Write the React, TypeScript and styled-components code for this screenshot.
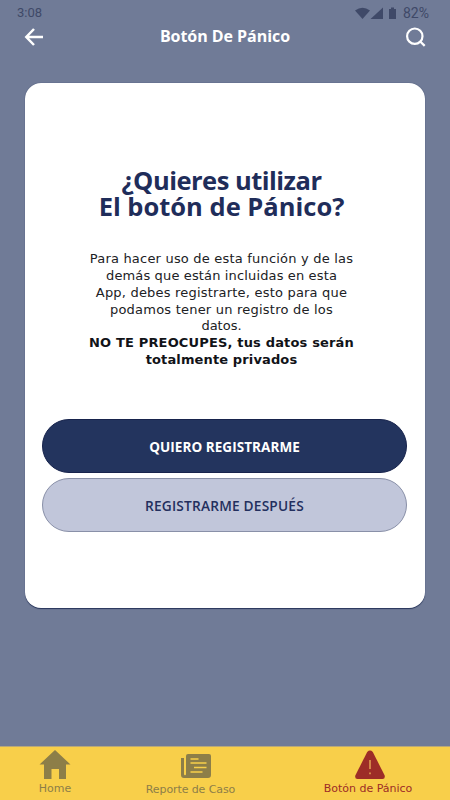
import React from 'react';
import styled, { createGlobalStyle } from 'styled-components';

const GlobalStyle = createGlobalStyle`
  * { box-sizing: border-box; }
  body { margin: 0; background: #707b97; }
  button { margin: 0; padding: 0; border: 0; background: none; cursor: pointer; }
  svg { display: block; }
`;

const Screen = styled.div`
  width: 450px;
  height: 800px;
  display: flex;
  flex-direction: column;
  background: #707b97;
  overflow: hidden;
`;

const StatusBar = styled.div`
  height: 24px;
  padding: 2px 21px 0 17px;
  display: flex;
  justify-content: space-between;
  align-items: center;
  color: #3f4968;
  font: 400 13px/20px Roboto, sans-serif;
`;

const StatusIcons = styled.div`
  display: flex;
  align-items: center;
  font-size: 14px;
  svg { margin-right: 5px; }
`;

const Header = styled.header`
  height: 25px;
  padding: 0 24px 0 24px;
  display: grid;
  grid-template-columns: 20px 1fr 20px;
  align-items: center;
`;

const Title = styled.h1`
  margin: -2px 0 0;
  text-align: center;
  color: #fff;
  font: 700 16px/22px 'Open Sans', sans-serif;
  letter-spacing: -0.05px;
`;

const Card = styled.main`
  width: 400px;
  height: 525px;
  margin: 34px 0 0 25px;
  padding: 84px 18px 0 17px;
  display: flex;
  flex-direction: column;
  align-items: center;
  flex-shrink: 0;
  background: #fff;
  border-radius: 16px;
  box-shadow: 0 0.5px 1px 0 #27345a;
`;

const Question = styled.h2`
  margin: 0 0 32px -6px;
  color: #1f2d5a;
  text-align: center;
  font: 700 25.5px/26px 'Open Sans', sans-serif;
`;

const Line = styled.span<{ $spacing?: number }>`
  display: block;
  white-space: nowrap;
  letter-spacing: ${({ $spacing = 0 }) => $spacing}px;
`;

const Message = styled.p`
  height: 117px;
  margin: 0 0 51px -6px;
  padding-top: 0.4px;
  color: #202124;
  text-align: center;
  font: 400 13px/16.7px 'DejaVu Sans', sans-serif;
`;

const Strong = styled.strong`
  color: #111318;
  font-weight: 700;
`;

const Action = styled.button<{ $primary?: boolean }>`
  && {
    width: 365px;
    height: 54px;
    margin-bottom: 5px;
    padding-top: 2px;
    flex-shrink: 0;
    border: 1px solid ${({ $primary }) => ($primary ? '#17234c' : '#8990a8')};
    border-radius: 27px;
    background: ${({ $primary }) => ($primary ? '#23345e' : '#c1c6da')};
    color: ${({ $primary }) => ($primary ? '#fff' : '#232f5e')};
    font: ${({ $primary }) => ($primary ? '700 13.5px' : '600 13.7px')}/20px 'Open Sans', sans-serif;
    letter-spacing: ${({ $primary }) => ($primary ? 0.06 : 0.2)}px;
  }
`;

const Nav = styled.nav`
  height: 54px;
  margin-top: auto;
  display: grid;
  grid-template-columns: 110px 161px 1fr;
  background: #f8cf4a;
  border-top: 1px solid #b8a87a;
`;

const Tab = styled.button<{ $active?: boolean; $top: number; $indent?: number; $spacing?: number }>`
  && {
    display: flex;
    flex-direction: column;
    align-items: center;
    padding-top: ${({ $top }) => $top}px;
    padding-left: ${({ $indent = 0 }) => $indent}px;
    color: ${({ $active }) => ($active ? '#9d2d27' : '#8d7e48')};
    font: 400 11px/14px 'DejaVu Sans', sans-serif;
    letter-spacing: ${({ $spacing = 0 }) => $spacing}px;
    white-space: nowrap;
  }
`;

const IconSlot = styled.span<{ $height: number; $shift?: number }>`
  height: ${({ $height }) => $height}px;
  margin-left: ${({ $shift = 0 }) => $shift}px;
`;

export default function App() {
  return (
    <>
      <GlobalStyle />
      <Screen>
        <StatusBar>
          <span>3:08</span>
          <StatusIcons>
            <svg width="43" height="12" viewBox="0 0 43 12" fill="currentColor">
              <path d="M0 3.5Q7.5-2 15 3.5L7.5 12Z" />
              <path d="M28 .5V12H15.5Z" />
              <path d="M34 2h2V.5h3V2h2v10h-7Z" />
            </svg>
            <span>82%</span>
          </StatusIcons>
        </StatusBar>
        <Header>
          <svg width="20" height="20" viewBox="0 0 20 20" fill="none" stroke="#fff" strokeWidth="2.5">
            <path d="M19 10H3M10 2 2.3 10 10 18" />
          </svg>
          <Title>Botón De Pánico</Title>
          <svg width="20" height="20" viewBox="0 0 20 20" fill="none" stroke="#fff" strokeWidth="2.2">
            <circle cx="8.8" cy="9.2" r="7.7" />
            <path d="m14 14.2 4.7 4.7" />
          </svg>
        </Header>
        <Card>
          <Question>
            <Line $spacing={-0.5}>¿Quieres utilizar</Line>
            <Line>El botón de Pánico?</Line>
          </Question>
          <Message>
            <Line $spacing={0.2}>Para hacer uso de esta función y de las</Line>
            <Line $spacing={0.14}>demás que están incluidas en esta</Line>
            <Line $spacing={0.2}>App, debes registrarte, esto para que</Line>
            <Line $spacing={0.22}>podamos tener un registro de los</Line>
            <Line>datos.</Line>
            <Strong>
              <Line $spacing={0.16}>NO TE PREOCUPES, tus datos serán</Line>
              <Line $spacing={0.13}>totalmente privados</Line>
            </Strong>
          </Message>
          <Action $primary>QUIERO REGISTRARME</Action>
          <Action>REGISTRARME DESPUÉS</Action>
        </Card>
        <Nav>
          <Tab $top={3}>
            <IconSlot $height={32}>
              <svg width="32" height="29" viewBox="0 0 32 29" fill="currentColor">
                <path d="M16 0 31.5 14.5H27V29H20V19H12.5V29H5V14.5H.5Z" />
              </svg>
            </IconSlot>
            Home
          </Tab>
          <Tab $top={7} $spacing={-0.1}>
            <IconSlot $height={29} $shift={11}>
              <svg width="30" height="24" viewBox="0 0 30 24" fill="currentColor">
                <path d="M7 0H28Q30 0 30 2V21Q30 24 27 24H3Q0 24 0 21V4H3V20Q3 21.3 4 21.3T5 20V2Q5 0 7 0Z" />
                <path d="M9.5 5h8M9.5 9h16M13 13.5h12.5M9.5 18h12" stroke="#f8cf4a" strokeWidth="1.4" />
              </svg>
            </IconSlot>
            Reporte de Caso
          </Tab>
          <Tab $active $top={3} $indent={15}>
            <IconSlot $height={32} $shift={4}>
              <svg width="32" height="30" viewBox="0 0 32 30" fill="currentColor">
                <path d="M13.2 2Q16-.8 18.8 2L30.7 25.5Q31.3 29 28.5 29H3.5Q.7 29 1.3 25.5Z" />
                <path d="M16 10v9M16 22.5v1.7" stroke="#edb55a" strokeWidth="1.3" />
              </svg>
            </IconSlot>
            Botón de Pánico
          </Tab>
        </Nav>
      </Screen>
    </>
  );
}
